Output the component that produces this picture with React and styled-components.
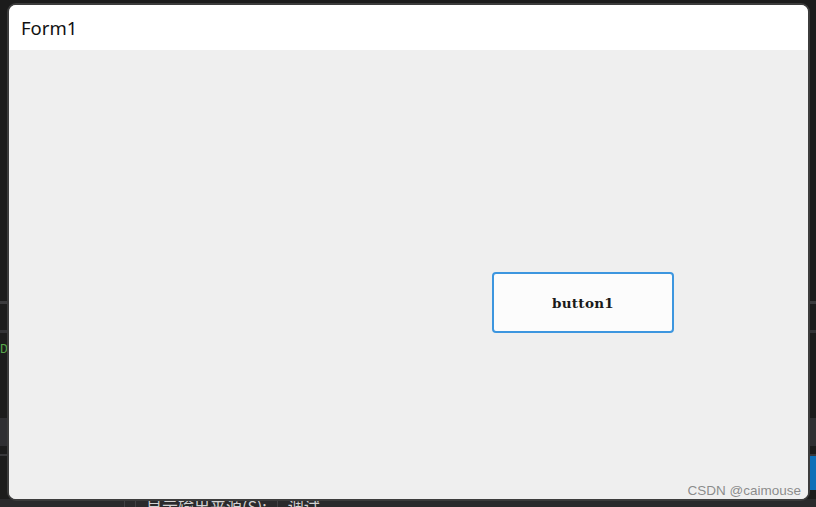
import styled, { createGlobalStyle } from "styled-components";

const GlobalStyle = createGlobalStyle`
    html, body {
        margin: 0;
        padding: 0;
        background: #1e1e1e;
        overflow: hidden;
    }
`;

export default function App(){
    return (
        <Screen>
            <GlobalStyle />
            <Backdrop>
                <Band $h={301} $bg="#1c1c1c" />
                <Band $h={3} $bg="#3b3b3d" />
                <Band $h={26} $bg="#1c1c1c" />
                <Band $h={3} $bg="#333336" />
                <CodeBand>
                    <CodeText>DI</CodeText>
                </CodeBand>
                <Band $h={28} $bg="#2f2f32" />
                <Band $h={8} $bg="#1c1c1c" />
                <Band $h={2} $bg="#38383b" />
                <SideRow>
                    <SideCell />
                    <SideCell $bg="#0e6fb8" />
                </SideRow>
                <Band $h={9} $bg="#1c1c1c" />
                <StatusBar>
                    <Divider />
                    <Divider />
                    <StatusText>显示输出来源(S):</StatusText>
                    <Divider />
                    <StatusText>调试</StatusText>
                </StatusBar>
            </Backdrop>
            <Window>
                <TitleBar>Form1</TitleBar>
                <Client>
                    <Button1>button1</Button1>
                </Client>
                <Watermark>CSDN @caimouse</Watermark>
            </Window>
        </Screen>
    );
}

const Screen = styled.div`
    position: relative;
    width: 816px;
    height: 507px;
    overflow: hidden;
    background: #1c1c1c;
`;

const Backdrop = styled.div`
    display: flex;
    flex-direction: column;
    width: 100%;
    height: 100%;
`;

const Band = styled.div`
    height: ${p => p.$h}px;
    flex-shrink: 0;
    background: ${p => p.$bg};
`;

const CodeBand = styled.div`
    height: 85px;
    flex-shrink: 0;
    background: #1c1c1c;
    display: flex;
    align-items: flex-start;
    padding-top: 9px;
    box-sizing: border-box;
`;

const CodeText = styled.span`
    font-family: "Liberation Mono", monospace;
    font-size: 13px;
    line-height: 15px;
    color: #57a64a;
`;

const SideRow = styled.div`
    height: 34px;
    flex-shrink: 0;
    display: flex;
    justify-content: space-between;
    background: #1c1c1c;
`;

const SideCell = styled.div`
    width: 8px;
    background: ${p => p.$bg || "#1c1c1c"};
`;

const StatusBar = styled.div`
    flex: 1;
    display: flex;
    align-items: flex-start;
    gap: 10px;
    padding-left: 124px;
    background: #2a2a2c;
    overflow: hidden;
`;

const Divider = styled.div`
    width: 1px;
    height: 20px;
    background: #414144;
`;

const StatusText = styled.span`
    font-family: "Noto Sans CJK SC", "Noto Sans", sans-serif;
    font-size: 16px;
    line-height: 16px;
    margin-top: -1px;
    color: #d0d0d0;
    white-space: nowrap;
`;

const Window = styled.div`
    position: absolute;
    left: 7px;
    top: 3px;
    width: 803px;
    height: 498px;
    box-sizing: border-box;
    border: 2px solid #3c3c3c;
    border-radius: 9px;
    background: #efefef;
    overflow: hidden;
    display: flex;
    flex-direction: column;
`;

const TitleBar = styled.div`
    height: 45px;
    flex-shrink: 0;
    background: #ffffff;
    display: flex;
    align-items: center;
    padding-left: 12px;
    font-family: "Noto Sans", "Open Sans", sans-serif;
    font-size: 18.5px;
    color: #111111;
`;

const Client = styled.div`
    flex: 1;
    background: #efefef;
    padding: 222px 0 0 483px;
`;

const Button1 = styled.div`
    width: 182px;
    height: 61px;
    box-sizing: border-box;
    border: 2px solid #3d96df;
    border-radius: 4px;
    background: #fcfcfc;
    display: flex;
    align-items: center;
    justify-content: center;
    padding-top: 1px;
    font-family: "DejaVu Serif", "Liberation Serif", serif;
    font-weight: bold;
    font-size: 13.5px;
    letter-spacing: 0.3px;
    color: #1a1a1a;
`;

const Watermark = styled.span`
    position: absolute;
    right: 7px;
    bottom: 1px;
    font-family: "Liberation Sans", Arial, sans-serif;
    font-size: 13.5px;
    color: rgba(120, 120, 120, 0.85);
`;
